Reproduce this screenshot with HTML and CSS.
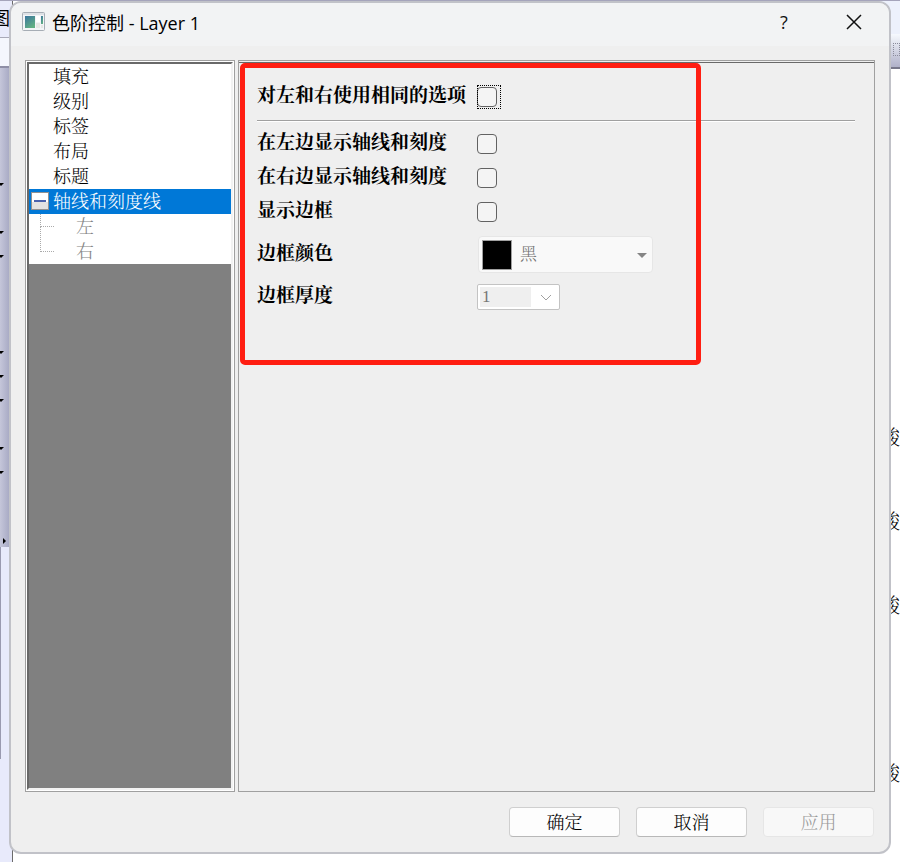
FILE: index.html
```html
<!DOCTYPE html>
<html lang="zh-CN">
<head>
<meta charset="utf-8">
<title>色阶控制 - Layer 1</title>
<link rel="stylesheet" href="styles.css">
</head>
<body>
<div class="desktop">
  <div class="behind-left">
    <div class="menu-strip">图</div>
    <div class="bar-strip"></div>
    <div class="tool-strip">
      <i class="drop" style="top:115px"></i>
      <i class="drop" style="top:163px"></i>
      <i class="drop" style="top:187px"></i>
      <i class="drop" style="top:283px"></i>
      <i class="drop" style="top:307px"></i>
      <i class="drop" style="top:331px"></i>
      <i class="drop" style="top:379px"></i>
      <i class="drop" style="top:403px"></i>
      <i class="more"></i>
    </div>
    <div class="side-strip"><i class="side-edge"></i></div>
  </div>
  <div class="behind-right">
    <div class="right-menu"></div>
    <div class="right-tools"><i class="grip"></i></div>
    <span class="cell" style="top:424px">酸</span>
    <span class="cell" style="top:508px">酸</span>
    <span class="cell" style="top:592px">酸</span>
    <span class="cell" style="top:760px">酸</span>
  </div>

  <main class="dialog">
    <header class="titlebar">
      <svg class="app-icon" viewBox="0 0 23 20" width="23" height="20">
        <defs>
          <linearGradient id="pane" x1="0" y1="0" x2="0.6" y2="1">
            <stop offset="0" stop-color="#3a759f"/><stop offset="1" stop-color="#62b083"/>
          </linearGradient>
        </defs>
        <rect x="0.5" y="0.5" width="22" height="18" rx="1" fill="#f3f5f7" stroke="#a6adb5"/>
        <path d="M1 2h21" stroke="#c9ced5"/>
        <rect x="3" y="4" width="10" height="12" fill="url(#pane)"/>
        <rect x="14" y="4" width="4" height="6" fill="#fff"/>
        <rect x="19" y="4" width="2" height="8" fill="url(#pane)"/>
        <rect x="14" y="11" width="4" height="5" fill="#e6e7e4"/>
        <rect x="19" y="13" width="2" height="3" fill="#e6e7e4"/>
      </svg>
      <h1 class="title">色阶控制 - Layer 1</h1>
      <button class="caption" type="button" aria-label="帮助">?</button>
      <button class="caption" type="button" aria-label="关闭">
        <svg viewBox="0 0 16 16" width="16" height="16"><path d="M1 1l14 14M15 1L1 15" stroke="#111" stroke-width="1.5" fill="none"/></svg>
      </button>
    </header>

    <div class="panels">
      <nav class="tree-frame">
        <div class="tree-well">
          <ul class="tree">
            <li class="node">填充</li>
            <li class="node">级别</li>
            <li class="node">标签</li>
            <li class="node">布局</li>
            <li class="node">标题</li>
            <li class="node selected"><button class="toggle" type="button" aria-label="折叠"></button>轴线和刻度线</li>
            <li class="node child">左</li>
            <li class="node child last">右</li>
          </ul>
        </div>
      </nav>

      <section class="options">
        <form class="form">
          <div class="row first">
            <label for="same">对左和右使用相同的选项</label>
            <span class="focus"><input id="same" type="checkbox"></span>
          </div>
          <hr class="rule">
          <div class="row">
            <label for="left">在左边显示轴线和刻度</label>
            <input id="left" type="checkbox">
          </div>
          <div class="row">
            <label for="right">在右边显示轴线和刻度</label>
            <input id="right" type="checkbox">
          </div>
          <div class="row">
            <label for="frame">显示边框</label>
            <input id="frame" type="checkbox">
          </div>
          <div class="row tall">
            <label for="color">边框颜色</label>
            <span class="color-box">
              <select id="color" class="color" disabled><option>黑</option></select>
              <i class="swatch"></i>
              <svg class="arrow" viewBox="0 0 10 5" width="10" height="5"><path d="M0 0h10L5 5z" fill="#858585"/></svg>
            </span>
          </div>
          <div class="row">
            <label for="width">边框厚度</label>
            <span class="width-box">
              <select id="width" class="width" disabled><option>1</option></select>
              <svg class="chevron" viewBox="0 0 12 7" width="12" height="7"><path d="M1 1l5 5 5-5" fill="none" stroke="#a0a0a0"/></svg>
            </span>
          </div>
        </form>
        <div class="highlight"></div>
      </section>
    </div>

    <footer class="actions">
      <button class="btn" type="button">确定</button>
      <button class="btn" type="button">取消</button>
      <button class="btn" type="button" disabled>应用</button>
    </footer>
  </main>
</div>
</body>
</html>
```
FILE: styles.css
```css
* { box-sizing: border-box; }

body {
  margin: 0;
  background: #fff;
  color: #000;
  font-family: "Noto Serif CJK SC", "Noto Sans CJK SC", serif;
  font-size: 18px;
  font-weight: 300;
}

.desktop {
  position: relative;
  display: flex;
  height: 100vh;
  padding: 0 9px 8px;
  overflow: hidden;
  border-top: 1px solid #a5a4bb;
}

/* Application window behind the dialog */
.behind-left,
.behind-right {
  position: absolute;
  top: 0;
  bottom: 0;
  display: flex;
  flex-direction: column;
  overflow: hidden;
}
.behind-left { left: 0; width: 13px; border-right: 1px solid #6b6b6b; }
.behind-right { right: 0; width: 20px; }

.menu-strip {
  display: flex;
  justify-content: flex-end;
  height: 37px;
  padding-right: 2px;
  background: #e9ebfb;
  border-bottom: 1px solid #a9a9b8;
  font-family: "Noto Sans CJK SC", sans-serif;
  font-weight: 400;
  line-height: 32px;
}
.bar-strip { height: 28px; background: #f4f6fd; }
.tool-strip {
  position: relative;
  height: 481px;
  background: linear-gradient(90deg, #c5c6da, #a9abc5 9px);
  border-top: 2px solid #8e8ea6;
}
.side-strip { flex: 1; background: #e8eafb; }
.side-edge {
  display: block;
  width: 1px;
  height: 212px;
  background: #9a9ab0;
}
.drop {
  position: absolute;
  left: -2px;
  border: 3px solid transparent;
  border-top-color: #000;
  border-bottom: 0;
}
.more {
  position: absolute;
  left: 3px;
  bottom: 3px;
  border: 3px solid transparent;
  border-left-color: #000;
  border-right: 0;
}

.right-menu { height: 33px; background: #edf1fc; }
.right-tools {
  position: relative;
  height: 35px;
  background: linear-gradient(#f6f9fe, #b0b1c9);
  border-bottom: 2px solid #77778a;
}
.grip {
  position: absolute;
  right: 0;
  top: 9px;
  width: 7px;
  height: 13px;
  border: 1px dotted #8b8b9b;
}
.cell {
  position: absolute;
  left: 0;
  font-size: 20px;
  line-height: 24px;
}

/* Dialog */
.dialog {
  position: relative;
  display: flex;
  flex: 1;
  flex-direction: column;
  overflow: hidden;
  background: #efefef;
  border: 2px solid #c1c2c8;
  border-radius: 12px;
}

.titlebar {
  display: flex;
  align-items: center;
  height: 43px;
  padding: 0 0 5px 11px;
  background: #f2f3f4;
}
.app-icon { margin-right: 7px; }
.title {
  flex: 1;
  margin: 0;
  font: 400 18px "Open Sans", "Noto Sans CJK SC", sans-serif;
}
.caption {
  display: flex;
  align-items: center;
  justify-content: center;
  width: 70px;
  height: 36px;
  padding: 0;
  background: none;
  border: 0;
  color: #111;
  font: 400 18px "Open Sans", sans-serif;
}

.panels {
  display: flex;
  flex: 1;
  gap: 3px;
  padding: 14px 14px 0;
}

.tree-frame {
  display: flex;
  width: 210px;
  padding: 1px;
  background: #fff;
  border: 1px solid #a0a0a0;
}
.tree-well {
  flex: 1;
  background: #808080;
  border: 2px solid #696969;
  border-right-color: #f2f2f2;
  border-bottom-color: #f2f2f2;
}
.tree { margin: 0; padding: 0; background: #fff; list-style: none; }
.node {
  position: relative;
  height: 25px;
  padding-left: 24px;
  line-height: 22px;
}
.selected { background: #0078d7; color: #fff; }
.toggle {
  position: absolute;
  left: 2px;
  top: 3px;
  width: 18px;
  height: 18px;
  padding: 0;
  background: linear-gradient(#4a62ad, #4a62ad) center / 12px 2px no-repeat, linear-gradient(#fff 55%, #e2e2e2 55%);
  border: 1px solid #919191;
}
.child { padding-left: 47px; color: #838383; }
.child::before {
  content: "";
  position: absolute;
  left: 11px;
  top: 0;
  width: 13px;
  height: 12px;
  border: 1px dotted #aaa;
  border-top: 0;
  border-right: 0;
}
.last::before { top: -13px; height: 25px; }

.options {
  position: relative;
  flex: 1;
  padding-top: 1px;
  border: 1px solid #a0a0a0;
}
.form {
  padding: 19px 19px 0 18px;
  border-top: 1px solid #696969;
}
.row {
  display: grid;
  grid-template-columns: 220px 1fr;
  align-items: center;
  height: 34px;
  font-size: 19px;
  font-weight: 700;
}
.row label { line-height: 24px; padding-bottom: 6px; }
.first { height: 30px; }
.tall { height: 51px; }
.rule {
  height: 2px;
  margin: 8px 0 5px;
  background: #fff;
  border: 0;
  border-top: 1px solid #a0a0a0;
}

input[type="checkbox"] {
  appearance: none;
  width: 20px;
  height: 20px;
  margin: 0;
  background: #f4f4f4;
  border: 1px solid #626262;
  border-radius: 4px;
}
.focus {
  display: flex;
  width: 24px;
  height: 24px;
  padding-top: 2px;
  outline: 1px dotted #000;
  outline-offset: -1px;
}

.color-box,
.width-box { position: relative; display: flex; }
.color-box { width: 176px; padding-left: 1px; }
.width-box { width: 83px; }
.color,
.width {
  appearance: none;
  width: 100%;
  margin: 0;
  color: #757575;
  font: 300 17px "Noto Serif CJK SC", "Noto Sans CJK SC", serif;
  opacity: 1;
}
.color {
  height: 37px;
  padding: 0 0 4px 41px;
  background: #f9f9f9;
  border: 1px solid #e6e6e6;
  border-radius: 4px;
}
.width {
  height: 26px;
  padding: 0 0 2px 4px;
  background: linear-gradient(#efefef, #efefef) 2px 2px / 51px 20px no-repeat #fff;
  border: 1px solid #c3c3c3;
  border-radius: 2px;
  font-family: "Liberation Serif", serif;
}
.swatch {
  position: absolute;
  left: 5px;
  top: 4px;
  width: 30px;
  height: 30px;
  background: #000;
  border: 1px solid #a0a0a0;
}
.arrow { position: absolute; right: 6px; top: 17px; }
.chevron { position: absolute; right: 8px; top: 10px; }

/* Red callout drawn over the options */
.highlight {
  position: absolute;
  left: 1px;
  top: 2px;
  width: 461px;
  height: 302px;
  border: 5px solid #ff1e12;
  border-radius: 5px;
  pointer-events: none;
}

.actions {
  display: flex;
  justify-content: flex-end;
  gap: 16px;
  padding: 15px 15px;
}
.btn {
  width: 111px;
  height: 30px;
  padding: 0 0 2px;
  background: #fdfdfd;
  border: 1px solid #cfcfcf;
  border-bottom-color: #b8b8b8;
  border-radius: 4px;
  color: #000;
  font: 300 18px "Noto Serif CJK SC", "Noto Sans CJK SC", serif;
}
.btn:disabled { background: #f8f8f8; border-color: #e6e6e6; color: #9a9a9a; }
```
